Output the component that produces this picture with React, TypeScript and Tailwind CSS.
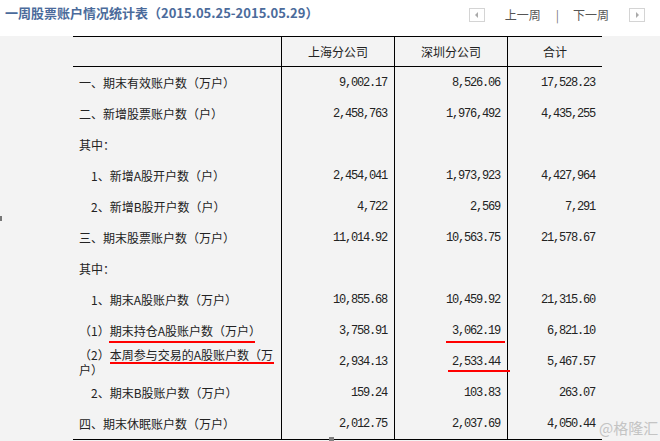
import React from 'react'

type Row = { label: React.ReactNode; sh?: string; sz?: string; total?: string; indent?: boolean }

const rows: Row[] = [
  { label: '一、期末有效账户数（万户）', sh: '9,002.17', sz: '8,526.06', total: '17,528.23' },
  { label: '二、新增股票账户数（户）', sh: '2,458,763', sz: '1,976,492', total: '4,435,255' },
  { label: '其中：' },
  { label: '1、新增A股开户数（户）', sh: '2,454,041', sz: '1,973,923', total: '4,427,964', indent: true },
  { label: '2、新增B股开户数（户）', sh: '4,722', sz: '2,569', total: '7,291', indent: true },
  { label: '三、期末股票账户数（万户）', sh: '11,014.92', sz: '10,563.75', total: '21,578.67' },
  { label: '其中：' },
  { label: '1、期末A股账户数（万户）', sh: '10,855.68', sz: '10,459.92', total: '21,315.60', indent: true },
  { label: '（1）期末持仓A股账户数（万户）', sh: '3,758.91', sz: '3,062.19', total: '6,821.10' },
  {
    label: (
      <span className="block leading-[15px]">
        （2）本周参与交易的A股账户数（万
        <br />
        户）
      </span>
    ),
    sh: '2,934.13',
    sz: '2,533.44',
    total: '5,467.57',
  },
  { label: '2、期末B股账户数（万户）', sh: '159.24', sz: '103.83', total: '263.07', indent: true },
  { label: '四、期末休眠账户数（万户）', sh: '2,012.75', sz: '2,037.69', total: '4,050.44' },
]

const cjk = { fontFamily: '"Noto Sans CJK SC", "Liberation Sans", sans-serif' }
const mono = { fontFamily: '"Liberation Mono", "DejaVu Sans Mono", monospace' }

function Num({ v }: { v?: string }) {
  return (
    <span className="text-[12px] tracking-[-1.2px]" style={mono}>
      {v}
    </span>
  )
}

export default function App() {
  return (
    <div className="relative h-[441px] w-[660px] overflow-hidden bg-[#f3f3f3] text-[#222]" style={cjk}>
      {/* header bar */}
      <div className="flex h-[36px] items-start bg-white">
        <p className="mt-[3px] pl-[5px] text-[13px] font-bold text-[#4b6b9b]">
          一周股票账户情况统计表（2015.05.25-2015.05.29）
        </p>
        <div className="ml-auto mt-[8px] flex items-center pr-[15px] text-[12px] text-[#555]">
          <span className="flex h-[14px] w-[16px] items-center justify-center border border-[#d4d4d4] bg-white">
            <span className="h-0 w-0 border-y-[3px] border-r-[3px] border-y-transparent border-r-[#aaa]" />
          </span>
          <span className="ml-[20px] leading-[14px]">上一周</span>
          <span className="ml-[15px] leading-[14px] text-[#777]">|</span>
          <span className="ml-[14px] leading-[14px]">下一周</span>
          <span className="ml-[20px] flex h-[14px] w-[16px] items-center justify-center border border-[#d4d4d4] bg-white">
            <span className="h-0 w-0 border-y-[3px] border-l-[3px] border-y-transparent border-l-[#aaa]" />
          </span>
        </div>
      </div>

      {/* table */}
      <div className="relative ml-[73px] w-[529px] border-y border-black text-[12px]">
        <div className="flex h-[30px] items-center border-b border-black">
          <div className="h-full w-[208px]" />
          <div className="flex h-full w-[113px] items-center justify-center border-l border-black">上海分公司</div>
          <div className="flex h-full w-[113px] items-center justify-center border-l border-black">深圳分公司</div>
          <div className="flex h-full w-[95px] items-center justify-center border-l border-black">合计</div>
        </div>
        {rows.map((r, i) => (
          <div key={i} className="flex h-[31px]">
            <div className={`flex h-full w-[208px] items-center ${r.indent ? 'pl-[18px]' : 'pl-[6px]'}`}>{r.label}</div>
            <div className="flex h-full w-[113px] items-center justify-end border-l border-black pr-[7px]">
              <Num v={r.sh} />
            </div>
            <div className="flex h-full w-[113px] items-center justify-end border-l border-black pr-[7px]">
              <Num v={r.sz} />
            </div>
            <div className="flex h-full w-[95px] items-center justify-end border-l border-black pr-[7px]">
              <Num v={r.total} />
            </div>
          </div>
        ))}

        {/* red annotation underlines */}
        <span className="absolute left-[36px] top-[304px] h-[2px] w-[146px] bg-[#f00]" />
        <span className="absolute left-[37px] top-[325px] h-[2px] w-[164px] bg-[#f00]" />
        <span className="absolute left-[373px] top-[304px] h-[2px] w-[59px] bg-[#f00]" />
        <span className="absolute left-[375px] top-[333px] h-[2px] w-[62px] bg-[#f00]" />
      </div>

      {/* small marks */}
      <span className="absolute left-0 top-[216px] h-[5px] w-[2px] bg-[#777]" />
      <span className="absolute left-[329px] top-[437px] h-[4px] w-[5px] bg-[#808080]" />

      {/* watermark */}
      <span className="absolute left-[599px] top-[417px] text-[15px] text-[#c4c4c4]">@格隆汇</span>
    </div>
  )
}
